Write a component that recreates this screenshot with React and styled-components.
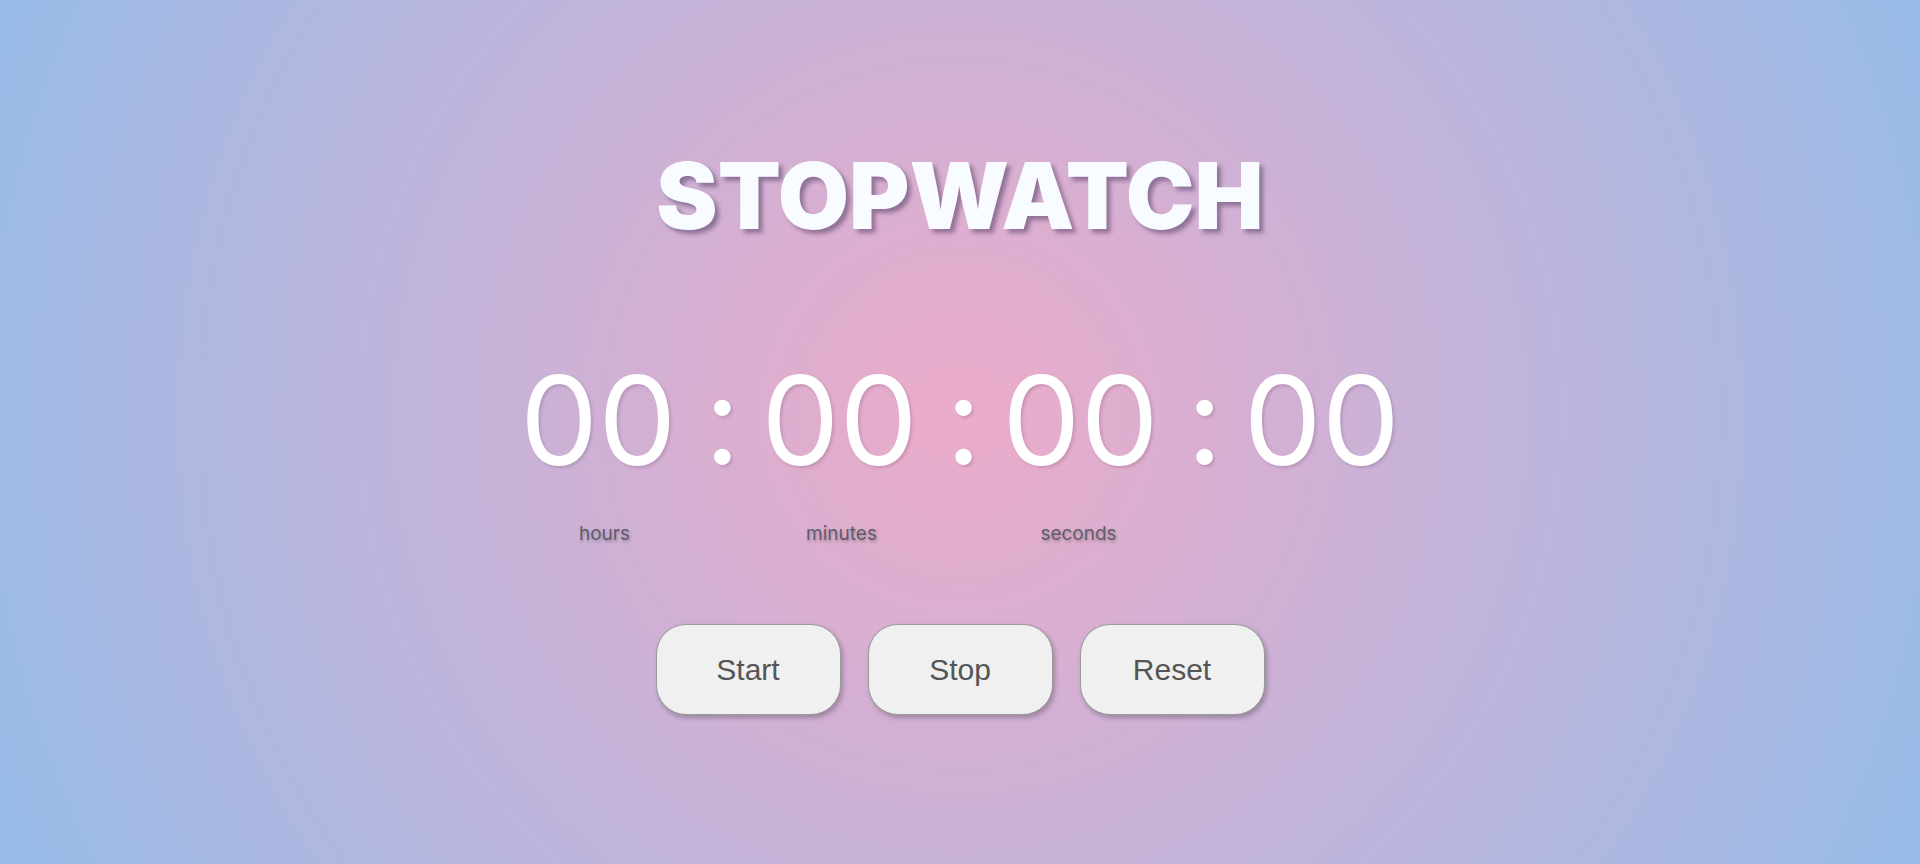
import React from 'react';
import styled, { createGlobalStyle } from 'styled-components';

const GlobalStyle = createGlobalStyle`
	html,
	body {
		margin: 0;
		padding: 0;
	}
`;

const units = ['hours', 'minutes', 'seconds', ''];

const App = () => {
	const time = ['00', '00', '00', '00'];
	return (
		<S_PAGE>
			<GlobalStyle />
			<S_TITLE>STOPWATCH</S_TITLE>
			<S_CLOCK>
				{time.map((t, i) => (
					<React.Fragment key={i}>
						{i > 0 && <S_COLON>:</S_COLON>}
						<S_DIGITS>{t}</S_DIGITS>
					</React.Fragment>
				))}
			</S_CLOCK>
			<S_LABELS>
				{units.map((u, i) => (
					<S_LABEL key={i}>{u}</S_LABEL>
				))}
			</S_LABELS>
			<S_BUTTONS>
				<S_BUTTON>Start</S_BUTTON>
				<S_BUTTON>Stop</S_BUTTON>
				<S_BUTTON>Reset</S_BUTTON>
			</S_BUTTONS>
		</S_PAGE>
	);
};

const S_PAGE = styled.div`
	min-height: 100vh;
	box-sizing: border-box;
	display: flex;
	flex-direction: column;
	align-items: center;
	padding-top: 150px;
	background: radial-gradient(circle at 50% 48%, #ecabca 0%, #97bce9 100%);
	font-family: Inter, 'Noto Sans', sans-serif;
`;

const S_TITLE = styled.h1`
	margin: 0;
	font-size: 92px;
	line-height: 1;
	font-weight: 900;
	color: #f8fbff;
	text-shadow: 4px 4px 4px rgba(60, 40, 80, 0.45);
`;

const S_CLOCK = styled.div`
	display: flex;
	align-items: baseline;
	margin-top: 116px;
	color: #fff;
	font-size: 124px;
	line-height: 1;
	font-weight: 400;
	text-shadow: 2px 2px 3px rgba(80, 40, 80, 0.18);
`;

const S_DIGITS = styled.span`
	letter-spacing: 0;
`;

const S_COLON = styled.span`
	margin: 0 21px 0 28px;
	transform: translateY(-1px);
`;

const S_LABELS = styled.div`
	display: grid;
	grid-template-columns: repeat(4, 237px);
	margin-top: 42px;
`;

const S_LABEL = styled.span`
	text-align: center;
	font-size: 19px;
	line-height: 1;
	color: #5e5e6a;
	text-shadow: 1px 2px 3px rgba(0, 0, 0, 0.25);
`;

const S_BUTTONS = styled.div`
	display: flex;
	gap: 27px;
	margin-top: 81px;
`;

const S_BUTTON = styled.button`
	width: 185px;
	height: 91px;
	border: 1px solid #9a9a9a;
	border-radius: 30px;
	background: #f0f0f0;
	box-shadow: 2px 3px 5px rgba(0, 0, 0, 0.25);
	font-family: 'Liberation Sans', Arial, sans-serif;
	font-size: 30px;
	color: #555;
	cursor: pointer;
`;

export default App;
